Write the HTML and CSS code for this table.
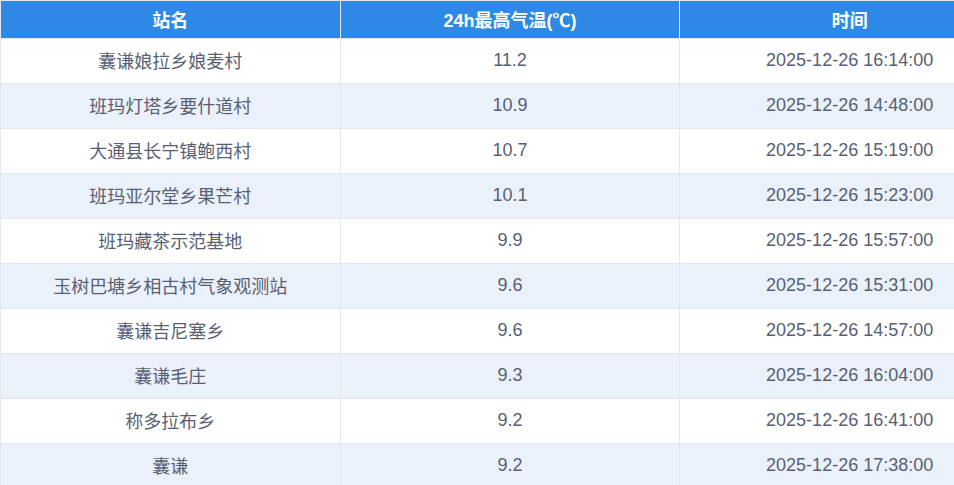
FILE: index.html
```html
<!DOCTYPE html>
<html lang="zh">
<head>
<meta charset="utf-8">
<link rel="stylesheet" href="styles.css">
</head>
<body>
<div class="wrap">
<table class="tbl">
<thead>
<tr><th>站名</th><th>24h最高气温(℃)</th><th>时间</th></tr>
</thead>
<tbody>
<tr><td>囊谦娘拉乡娘麦村</td><td>11.2</td><td>2025-12-26 16:14:00</td></tr>
<tr><td>班玛灯塔乡要什道村</td><td>10.9</td><td>2025-12-26 14:48:00</td></tr>
<tr><td>大通县长宁镇鲍西村</td><td>10.7</td><td>2025-12-26 15:19:00</td></tr>
<tr><td>班玛亚尔堂乡果芒村</td><td>10.1</td><td>2025-12-26 15:23:00</td></tr>
<tr><td>班玛藏茶示范基地</td><td>9.9</td><td>2025-12-26 15:57:00</td></tr>
<tr><td>玉树巴塘乡相古村气象观测站</td><td>9.6</td><td>2025-12-26 15:31:00</td></tr>
<tr><td>囊谦吉尼塞乡</td><td>9.6</td><td>2025-12-26 14:57:00</td></tr>
<tr><td>囊谦毛庄</td><td>9.3</td><td>2025-12-26 16:04:00</td></tr>
<tr><td>称多拉布乡</td><td>9.2</td><td>2025-12-26 16:41:00</td></tr>
<tr><td>囊谦</td><td>9.2</td><td>2025-12-26 17:38:00</td></tr>
</tbody>
</table>
</div>
</body>
</html>
```
FILE: styles.css
```css
html, body {
  margin: 0;
  padding: 0;
  background: #ffffff;
}
.wrap {
  width: 954px;
  height: 485px;
  overflow: hidden;
}
.tbl {
  width: 1020px;
  table-layout: fixed;
  border-collapse: collapse;
  font-family: "Liberation Sans", "Noto Sans CJK SC", sans-serif;
  font-size: 18px;
  color: #595f72;
}
.tbl th {
  height: 38px;
  padding: 0 0 2px;
  box-sizing: border-box;
  background: #2e89e6;
  color: #ffffff;
  font-weight: bold;
  text-align: center;
  border: 1px solid #e4e7ed;
  border-bottom: none;
}
.tbl td {
  height: 45px;
  padding: 0 0 2px;
  box-sizing: border-box;
  text-align: center;
  border: 1px solid #e4e7ed;
}
.tbl tbody tr:nth-child(even) td {
  background: #eaf1fa;
}
```
